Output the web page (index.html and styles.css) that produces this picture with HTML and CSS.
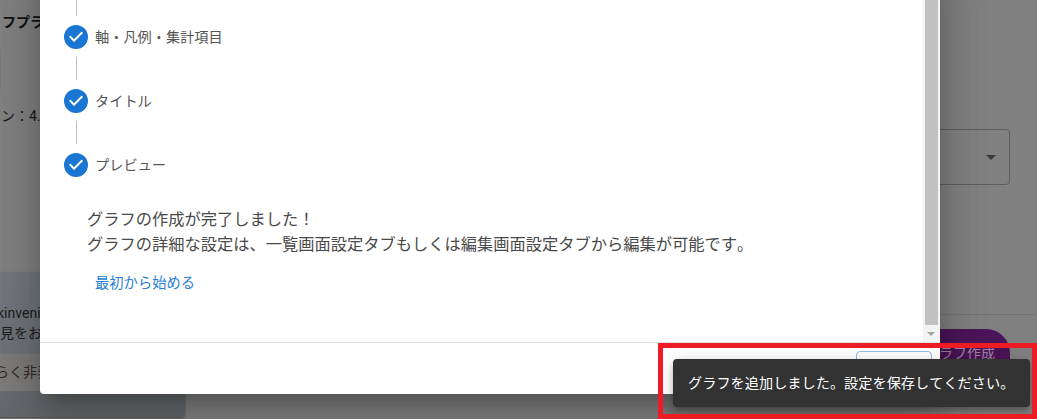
FILE: index.html
```html
<!DOCTYPE html>
<html lang="ja">
<head>
<meta charset="utf-8">
<title>グラフ作成</title>
<link rel="stylesheet" href="styles.css">
</head>
<body>
<div class="page">
  <div class="behind">
    <p class="bg-title">フプラ</p>
    <div class="bg-thumb"></div>
    <p class="bg-version">ン：4.</p>
    <div class="bg-card">
      <p class="bg-card-text bg-card-latin">kinvenio</p>
      <p class="bg-card-text">見をお</p>
      <div class="bg-card-btn">らく非表示</div>
    </div>
    <div class="bg-select"><span class="bg-caret"></span></div>
    <div class="bg-rule"></div>
    <div class="bg-create">ラフ作成</div>
  </div>

  <div class="dialog">
    <div class="dialog-body">
      <div class="dialog-scroll">
        <div class="connector connector-top"></div>
        <div class="step">
          <svg class="check" viewBox="0 0 24 24"><path d="M12 0a12 12 0 1 0 0 24 12 12 0 0 0 0-24zm-2 17l-5-5 1.4-1.4 3.6 3.6 7.6-7.6L19 8l-9 9z"/></svg>
          <span class="step-label">軸・凡例・集計項目</span>
        </div>
        <div class="connector"></div>
        <div class="step">
          <svg class="check" viewBox="0 0 24 24"><path d="M12 0a12 12 0 1 0 0 24 12 12 0 0 0 0-24zm-2 17l-5-5 1.4-1.4 3.6 3.6 7.6-7.6L19 8l-9 9z"/></svg>
          <span class="step-label">タイトル</span>
        </div>
        <div class="connector"></div>
        <div class="step">
          <svg class="check" viewBox="0 0 24 24"><path d="M12 0a12 12 0 1 0 0 24 12 12 0 0 0 0-24zm-2 17l-5-5 1.4-1.4 3.6 3.6 7.6-7.6L19 8l-9 9z"/></svg>
          <span class="step-label">プレビュー</span>
        </div>
        <div class="message">
          <p>グラフの作成が完了しました！</p>
          <p>グラフの詳細な設定は、一覧画面設定タブもしくは編集画面設定タブから編集が可能です。</p>
        </div>
        <a class="restart">最初から始める</a>
      </div>
      <div class="scrollbar">
        <div class="scroll-thumb"></div>
        <span class="scroll-arrow"></span>
      </div>
    </div>
    <div class="dialog-footer">
      <div class="footer-btn"></div>
    </div>
  </div>

  <div class="toast">グラフを追加しました。設定を保存してください。</div>
  <div class="highlight"></div>
</div>
</body>
</html>
```
FILE: styles.css
```css
* { box-sizing: border-box; }
html, body { margin: 0; padding: 0; }
body {
  font-family: Roboto, "Noto Sans CJK JP", "Liberation Sans", sans-serif;
  background: #808080;
  overflow: hidden;
  text-spacing-trim: space-all;
  font-kerning: none;
  font-feature-settings: "palt" 0, "kern" 0;
}
p { margin: 0; }
.page {
  position: relative;
  width: 1037px;
  height: 419px;
  overflow: hidden;
  background: #808080;
}
.behind { position: absolute; inset: 0; }
.bg-title {
  position: absolute; left: 2px; top: 12px;
  font-size: 14px; line-height: 20px; font-weight: 700; color: #111;
}
.bg-thumb {
  position: absolute; left: 0; top: 50px;
  width: 1px; height: 40px; background: #787878;
}
.bg-version {
  position: absolute; left: 1px; top: 106px;
  font-size: 14px; line-height: 20px; color: #1a1a1a;
}
.bg-card {
  position: absolute; left: -10px; top: 272px;
  width: 195px; height: 145px;
  padding: 31px 0 0 10px;
  background: linear-gradient(180deg, #73777b 0%, #6d7175 60%, #63676a 100%);
  border-radius: 4px;
  box-shadow: 0 1px 2px rgba(0,0,0,.4);
}
.bg-card-text { font-size: 14px; line-height: 20px; color: #1d1d1d; white-space: nowrap; }
.bg-card-latin { margin-left: -3px; }
.bg-card-btn {
  margin: 11px 0 0 -10px; height: 37px; padding-left: 5px;
  background: #7d7b79; font-size: 14px; line-height: 36px; color: #2a2a2a; white-space: nowrap;
}
.bg-select {
  position: absolute; left: 900px; top: 129px;
  width: 110px; height: 56px;
  border: 1px solid #5e5e5e; border-radius: 4px;
}
.bg-caret {
  position: absolute; right: 13px; top: 25px;
  border-left: 5px solid transparent; border-right: 5px solid transparent;
  border-top: 5px solid #3a3a3a;
}
.bg-rule {
  position: absolute; left: 900px; right: 0; top: 314px;
  height: 1px; background: #747474;
}
.bg-create {
  position: absolute; left: 880px; top: 329px;
  width: 130px; height: 56px; padding: 14px 0 0 59px;
  border-radius: 24px;
  background: #4c1458;
  color: #9c8aa2; font-size: 14px; line-height: 20px; white-space: nowrap;
}
.dialog {
  position: absolute; left: 40px; top: -40px;
  width: 900px; height: 434px;
  display: flex; flex-direction: column;
  background: #fff;
  border-radius: 4px;
  box-shadow: 0 11px 15px -7px rgba(0,0,0,.2), 0 24px 38px 3px rgba(0,0,0,.14), 0 9px 46px 8px rgba(0,0,0,.12);
}
.dialog-body { flex: 1; min-height: 0; display: flex; }
.dialog-scroll { flex: 1; padding: 40px 0 0 24px; min-width: 0; }
.step { display: flex; align-items: center; height: 24px; }
.check { width: 24px; height: 24px; flex: none; fill: #1976d2; }
.step-label { margin-left: 7px; margin-top: -1px; font-size: 14.2px; line-height: 24px; color: #555; }
.connector { width: 1px; height: 23px; margin: 8px 0 9px 12px; background: #bdbdbd; }
.connector-top { height: 16px; margin-top: 0; }
.message { margin: 30px 0 0 23px; font-size: 16.25px; line-height: 25px; color: #4a4a4a; white-space: nowrap; }
.restart { display: block; margin: 16px 0 0 31px; font-size: 14.3px; line-height: 20px; color: #2a7fd6; }
.scrollbar {
  position: relative; width: 17px; flex: none;
  background: #f3f3f3;
}
.scroll-thumb {
  position: absolute; left: 2px; top: 0; width: 13px; height: 365px;
  background: #c1c1c1;
}
.scroll-arrow {
  position: absolute; left: 4px; bottom: 6px;
  border-left: 4px solid transparent; border-right: 4px solid transparent;
  border-top: 4px solid #a3a3a3;
}
.dialog-footer {
  flex: none; height: 52px; position: relative;
  border-top: 1px solid #e0e0e0;
}
.footer-btn {
  position: absolute; left: 816px; top: 8px;
  width: 76px; height: 36px;
  border: 1px solid #90bde8; border-radius: 4px;
}
.toast {
  position: absolute; left: 673px; top: 359px;
  width: 357px; height: 48px;
  padding-left: 15px;
  background: #323232; color: #fff;
  border-radius: 4px;
  font-size: 14.2px; line-height: 48px; white-space: nowrap;
  box-shadow: 0 3px 5px -1px rgba(0,0,0,.2), 0 6px 10px 0 rgba(0,0,0,.14), 0 1px 18px 0 rgba(0,0,0,.12);
}
.highlight {
  position: absolute; left: 658px; top: 343px;
  width: 379px; height: 76px;
  border: 5px solid #ed1c24;
}
```
